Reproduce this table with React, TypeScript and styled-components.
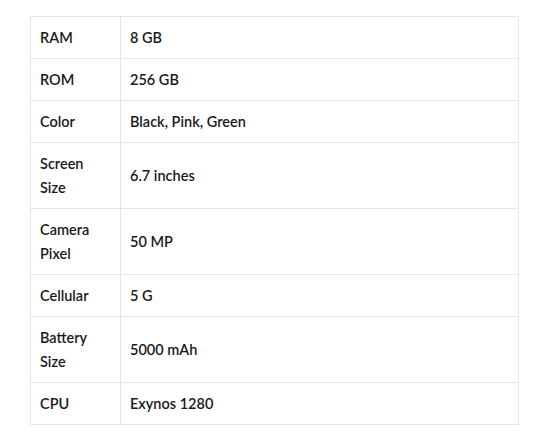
import React from "react";
import styled, { createGlobalStyle } from "styled-components";

const Global = createGlobalStyle`
  html, body { margin: 0; padding: 0; background: #fff; }
  body { font-family: Lato, "Noto Sans", sans-serif; }
`;

const Page = styled.div`
  padding: 16px 0 0 30px;
`;

const Table = styled.table`
  width: 489px;
  border-collapse: collapse;
  border: 1px solid #e6e6e6;
  font-size: 14.5px;
  font-weight: 600;
  color: #1a1a1a;
`;

const Cell = styled.td<{ $label?: boolean }>`
  border: 1px solid #e6e6e6;
  padding: 9px 9px 8px 9px;
  line-height: 24px;
  vertical-align: middle;
  width: ${(p) => (p.$label ? "71px" : "auto")};
`;

const rows: [string, string][] = [
  ["RAM", "8 GB"],
  ["ROM", "256 GB"],
  ["Color", "Black, Pink, Green"],
  ["Screen Size", "6.7 inches"],
  ["Camera Pixel", "50 MP"],
  ["Cellular", "5 G"],
  ["Battery Size", "5000 mAh"],
  ["CPU", "Exynos 1280"],
];

export default function App() {
  return (
    <>
      <Global />
      <Page>
        <Table>
          <tbody>
            {rows.map(([k, v]) => (
              <tr key={k}>
                <Cell $label>{k}</Cell>
                <Cell>{v}</Cell>
              </tr>
            ))}
          </tbody>
        </Table>
      </Page>
    </>
  );
}
